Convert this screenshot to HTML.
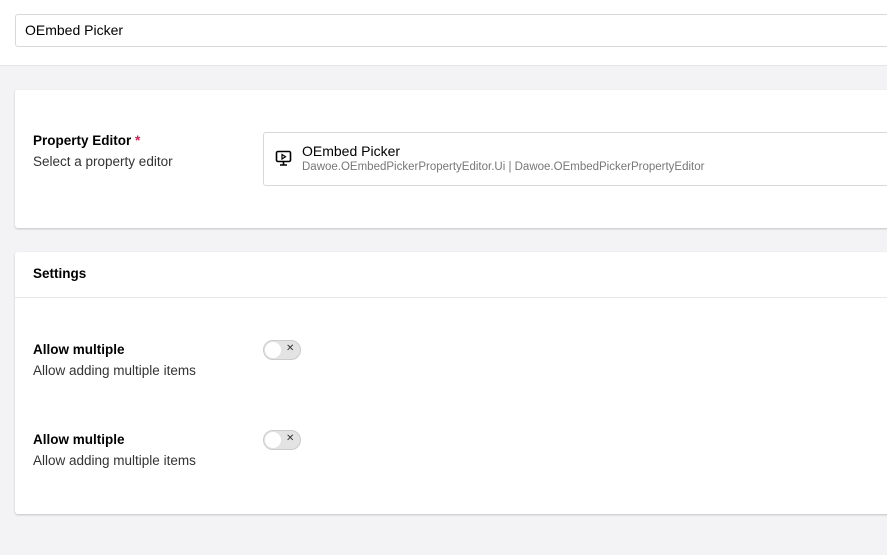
<html><head><style>
body{margin:0;width:887px;height:555px;overflow:hidden;background:#f3f3f5;font-family:"Liberation Sans",sans-serif;color:#1b264f;position:relative}
.hdr{position:absolute;left:0;top:0;width:887px;height:65px;background:#fff;border-bottom:1px solid #e4e4e4}
.inp{position:absolute;left:15px;top:14px;width:880px;height:33px;border:1px solid #d8d7d9;border-radius:3px;box-sizing:border-box;font-size:14px;line-height:31px;padding-left:9px;color:#000}
.card{position:absolute;left:15px;width:880px;background:#fff;border-radius:3px;box-shadow:0 1px 2px rgba(0,0,0,.2)}
.lbl{position:absolute;left:18px;font-size:13.5px;font-weight:bold;color:#000}
.desc{position:absolute;left:18px;font-size:13.5px;color:#333}
.tg{position:absolute;left:248px;width:38px;height:20px;border-radius:10px;background:#e3e3e3;border:1px solid #ccc;box-sizing:border-box}
.tg:before{content:"";position:absolute;left:1px;top:1px;width:16px;height:16px;border-radius:50%;background:#fff}
.tg span{position:absolute;left:22px;top:2px;font-size:10px;color:#333}
</style></head><body>
<div class="hdr"><div class="inp">OEmbed Picker</div></div>
<div class="card" style="top:90px;height:138px">
<div class="lbl" style="top:43px">Property Editor <span style="color:#d42054">*</span></div>
<div class="desc" style="top:64px">Select a property editor</div>
<div style="position:absolute;left:248px;top:42px;width:640px;height:54px;border:1px solid #d8d7d9;border-radius:3px;box-sizing:border-box">
<svg style="position:absolute;left:11px;top:17px" width="17" height="17" viewBox="0 0 17 17" fill="none" stroke="#000" stroke-width="1.6"><rect x="1.5" y="1.5" width="14" height="10" rx="1.5"/><path d="M8.5 11.5v3M5 15h7"/><path d="M7 4.5v4.5l3.5-2.2z" stroke-width="1.2"/></svg>
<div style="position:absolute;left:38px;top:10px;font-size:14px;color:#000">OEmbed Picker</div>
<div style="position:absolute;left:38px;top:28px;font-size:11.5px;color:#777">Dawoe.OEmbedPickerPropertyEditor.Ui | Dawoe.OEmbedPickerPropertyEditor</div>
</div></div>
<div class="card" style="top:252px;height:262px">
<div class="lbl" style="top:14px">Settings</div>
<div style="position:absolute;left:0;top:45px;width:100%;border-top:1px solid #e8e8e8"></div>
<div class="lbl" style="top:90px">Allow multiple</div>
<div class="desc" style="top:111px">Allow adding multiple items</div>
<div class="tg" style="top:88px"><span>✕</span></div>
<div class="lbl" style="top:180px">Allow multiple</div>
<div class="desc" style="top:201px">Allow adding multiple items</div>
<div class="tg" style="top:178px"><span>✕</span></div>
</div>
</body></html>
